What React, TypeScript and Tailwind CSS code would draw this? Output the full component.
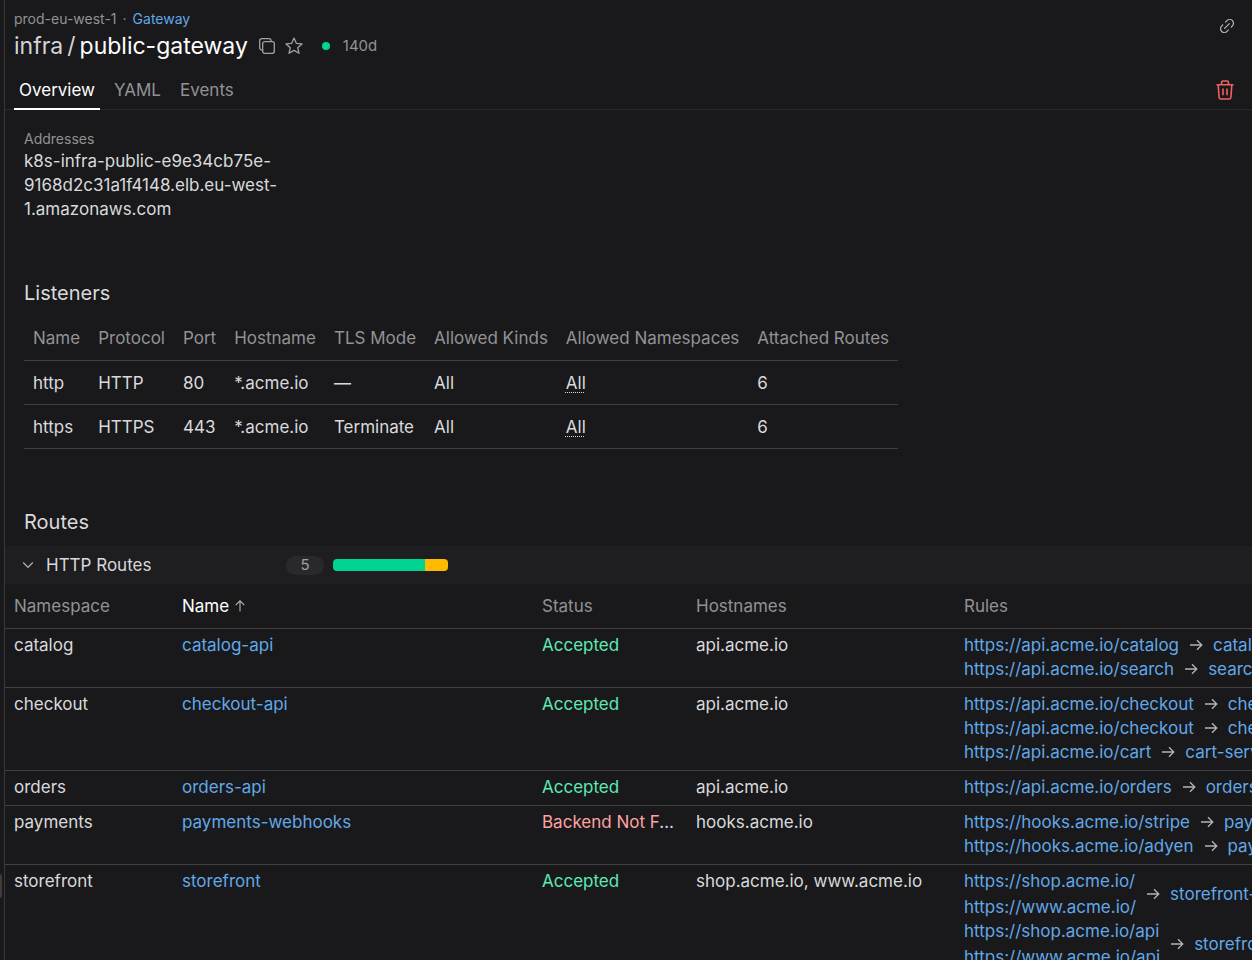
import type { ReactNode } from "react";

type Rule = { from: string[]; to: string };
type Route = { ns: string; name: string; status: string; ok: boolean; hosts: string; rules: Rule[] };

const listenerHeads = ["Name", "Protocol", "Port", "Hostname", "TLS Mode", "Allowed Kinds", "Allowed Namespaces", "Attached Routes"];
const listeners = [
  ["http", "HTTP", "80", "*.acme.io", "—", "All", "All", "6"],
  ["https", "HTTPS", "443", "*.acme.io", "Terminate", "All", "All", "6"],
];

const routes: Route[] = [
  {
    ns: "catalog", name: "catalog-api", status: "Accepted", ok: true, hosts: "api.acme.io",
    rules: [
      { from: ["https://api.acme.io/catalog"], to: "catalog-service" },
      { from: ["https://api.acme.io/search"], to: "search-service" },
    ],
  },
  {
    ns: "checkout", name: "checkout-api", status: "Accepted", ok: true, hosts: "api.acme.io",
    rules: [
      { from: ["https://api.acme.io/checkout"], to: "checkout-service" },
      { from: ["https://api.acme.io/checkout"], to: "checkout-service" },
      { from: ["https://api.acme.io/cart"], to: "cart-service" },
    ],
  },
  {
    ns: "orders", name: "orders-api", status: "Accepted", ok: true, hosts: "api.acme.io",
    rules: [{ from: ["https://api.acme.io/orders"], to: "orders-service" }],
  },
  {
    ns: "payments", name: "payments-webhooks", status: "Backend Not Found", ok: false, hosts: "hooks.acme.io",
    rules: [
      { from: ["https://hooks.acme.io/stripe"], to: "payments-service" },
      { from: ["https://hooks.acme.io/adyen"], to: "payments-service" },
    ],
  },
  {
    ns: "storefront", name: "storefront", status: "Accepted", ok: true, hosts: "shop.acme.io, www.acme.io",
    rules: [
      { from: ["https://shop.acme.io/", "https://www.acme.io/"], to: "storefront-web" },
      { from: ["https://shop.acme.io/api", "https://www.acme.io/api"], to: "storefront-api" },
    ],
  },
];

function Link({ children }: { children: ReactNode }) {
  return <a href="#" className="text-[#62a8e8]">{children}</a>;
}

function Arrow() {
  return (
    <svg viewBox="0 0 14 14" className="size-3.5 shrink-0 text-[#b4b4b8]" fill="none" stroke="currentColor" strokeWidth="1.3" aria-hidden="true">
      <path d="M1 7h11.6M8 2.2 12.8 7 8 11.8" />
    </svg>
  );
}

export default function App() {
  return (
    <div className="flex h-screen overflow-hidden bg-[#19191b] font-['Inter','Liberation_Sans',sans-serif] text-[17px] leading-6 text-[#d9d9dc]">
      <div className="flex w-1 shrink-0 flex-col justify-end pb-[62px]">
        <div className="h-6 w-0.5 rounded-r-full bg-[#3c3c3e]" />
      </div>
      <main className="min-w-0 flex-1 overflow-hidden border-l border-[#38383a]">
        <header className="flex items-start justify-between pt-[9px] pr-4 pl-[9px]">
          <div>
            <div className="flex gap-1.5 text-[14px] leading-5 text-[#929296]">
              <span>prod-eu-west-1</span>
              <span>·</span>
              <Link>Gateway</Link>
            </div>
            <div className="flex items-center pt-px">
              <h1 className="flex gap-1 text-[23px] leading-8 text-white">
                <span className="text-[#d4d4d8]">infra</span>
                <span className="text-[#d4d4d8]">/</span>
                <span>public-gateway</span>
              </h1>
              <button type="button" aria-label="Copy name" className="ml-[11px] text-[#a1a1a5]">
                <svg viewBox="0 0 16 16" className="size-4" fill="none" stroke="currentColor" strokeWidth="1.3" aria-hidden="true">
                  <rect x="3.7" y="3.7" width="11.6" height="11.6" rx="2" />
                  <path d="M3.4 12H2.7a2 2 0 0 1-2-2V2.700a2 2 0 0 1 2-2H10a2 2 0 0 1 2 2v.7" />
                </svg>
              </button>
              <button type="button" aria-label="Add to favourites" className="ml-2.5 text-[#a1a1a5]">
                <svg viewBox="0 0 18 18" className="size-[18px]" fill="none" stroke="currentColor" strokeWidth="1.3" strokeLinejoin="round" aria-hidden="true">
                  <path d="m9 1.1 2.3 5.2 5.7.6-4.3 3.8 1.3 5.6L9 13.4l-5 2.9 1.3-5.6L1 6.9l5.700-.6Z" />
                </svg>
              </button>
              <span className="ml-[19px] size-2 rounded-full bg-[#00d492]" />
              <span className="ml-[13px] text-[15px] text-[#929296]">140d</span>
            </div>
          </div>
          <button type="button" aria-label="Copy link" className="mt-2.5 mr-0.5 text-[#b4b4b8]">
            <svg viewBox="0 0 14 14" className="size-3.5" fill="none" stroke="currentColor" strokeWidth="1.2" strokeLinecap="round" aria-hidden="true">
              <path d="M4.600 9.400 9.400 4.600M5.600 3 7 1.600a3.700 3.700 0 0 1 5.400 5.200L11.200 8.200M2.800 5.900 1.600 7.200A3.700 3.700 0 0 0 7 12.400l1.400-1.500" />
            </svg>
          </button>
        </header>

        <div className="mt-2 flex items-center justify-between border-b border-[#29292b] pr-4 pl-[9px]">
          <nav className="-mb-px flex gap-[9px]">
            <a href="#" className="border-b-2 border-white px-[5px] pt-2 pb-1.5 text-white">Overview</a>
            <a href="#" className="border-b-2 border-transparent px-[5px] pt-2 pb-1.5 text-[#929296]">YAML</a>
            <a href="#" className="border-b-2 border-transparent px-[5px] pt-2 pb-1.5 text-[#929296]">Events</a>
          </nav>
          <button type="button" aria-label="Delete" className="mr-0.5 text-[#f2605f]">
            <svg viewBox="0 0 18 20" className="h-5 w-[18px]" fill="none" stroke="currentColor" strokeWidth="1.6" strokeLinejoin="round" aria-hidden="true">
              <path d="M.5 4.700h17M5.600 4.500V2.300A1.300 1.300 0 0 1 6.900 1h4.200a1.300 1.300 0 0 1 1.300 1.300v2.200M2.200 5l.9 12.500A1.700 1.700 0 0 0 4.800 19h8.400a1.700 1.700 0 0 0 1.700-1.500L15.800 5M7 8.400v6.800M11 8.400v6.800" />
            </svg>
          </button>
        </div>

        <section className="w-[290px] pt-[19px] pl-[19px]">
          <div className="text-[14px] leading-5 text-[#929296]">Addresses</div>
          <p>k8s-infra-public-e9e34cb75e-<wbr />9168d2c31a1f4148.elb.eu-west-1.amazonaws.com</p>
        </section>

        <section className="pt-[58px] pl-[19px]">
          <h2 className="text-[20px] leading-7">Listeners</h2>
          <table className="mt-[9px] text-left whitespace-nowrap">
            <thead>
              <tr className="border-b border-[#404042] text-[#929296]">
                {listenerHeads.map((h) => (
                  <th key={h} className="px-[9px] py-2.5 font-normal">{h}</th>
                ))}
              </tr>
            </thead>
            <tbody>
              {listeners.map((row) => (
                <tr key={row[0]} className="border-b border-[#404042]">
                  {row.map((cell, i) => (
                    <td key={i} className="px-[9px] pt-2.5 pb-[9px]">
                      {i === 6 ? <span className="underline decoration-dotted decoration-1 underline-offset-3">{cell}</span> : cell}
                    </td>
                  ))}
                </tr>
              ))}
            </tbody>
          </table>
        </section>

        <section className="pt-[59px]">
          <h2 className="pl-[19px] text-[20px] leading-7">Routes</h2>
          <button type="button" className="mt-2.5 flex h-[38px] w-full items-center bg-[#1e1e20] pl-[17px] text-left">
            <svg viewBox="0 0 12 12" className="size-3 text-[#b4b4b8]" fill="none" stroke="currentColor" strokeWidth="1.2" aria-hidden="true">
              <path d="m1.200 3.500 4.800 5 4.800-5" />
            </svg>
            <span className="ml-3 w-[240px]">HTTP Routes</span>
            <span className="flex h-[19px] w-[38px] items-center justify-center rounded-full bg-[#29292b] text-[15px] text-[#a1a1a5]">5</span>
            <span className="ml-[9px] flex h-3 w-[115px] overflow-hidden rounded-[4px]">
              <span className="w-4/5 bg-[#00d492]" />
              <span className="flex-1 bg-[#ffb900]" />
            </span>
          </button>
          <table className="w-[1500px] table-fixed text-left whitespace-nowrap">
            <colgroup>
              <col className="w-[168px]" />
              <col className="w-[360px]" />
              <col className="w-[154px]" />
              <col className="w-[268px]" />
              <col />
            </colgroup>
            <thead>
              <tr className="border-b border-[#404042] text-[#929296]">
                <th className="px-[9px] py-2.5 font-normal">Namespace</th>
                <th className="px-[9px] py-2.5 font-normal text-white" aria-sort="ascending">
                  <span className="flex items-center gap-1.5">
                    Name
                    <svg viewBox="0 0 10 12" className="h-3 w-2.5 text-[#b4b4b8]" fill="none" stroke="currentColor" strokeWidth="1.1" aria-hidden="true">
                      <path d="M5 11.500V1M.7 5.200 5 .9l4.300 4.300" />
                    </svg>
                  </span>
                </th>
                <th className="px-[9px] py-2.5 font-normal">Status</th>
                <th className="px-[9px] py-2.5 font-normal">Hostnames</th>
                <th className="px-[9px] py-2.5 font-normal">Rules</th>
              </tr>
            </thead>
            <tbody>
              {routes.map((r) => (
                <tr key={r.ns} className="border-b border-[#404042] align-top">
                  <td className="px-[9px] pt-1 pb-1.5">{r.ns}</td>
                  <td className="px-[9px] pt-1 pb-1.5"><Link>{r.name}</Link></td>
                  <td className="truncate px-[9px] pt-1 pb-1.5">
                    <span className={r.ok ? "text-[#5ee9b5]" : "text-[#ffa2a2]"}>{r.status}</span>
                  </td>
                  <td className="px-[9px] pt-1 pb-1.5">{r.hosts}</td>
                  <td className="px-[9px] pt-1 pb-1.5">
                    {r.rules.map((rule, i) => (
                      <div key={i} className="flex items-center gap-2.5">
                        <div className="flex flex-col gap-0.5">
                          {rule.from.map((u) => <Link key={u}>{u}</Link>)}
                        </div>
                        <Arrow />
                        <Link>{rule.to}</Link>
                      </div>
                    ))}
                  </td>
                </tr>
              ))}
            </tbody>
          </table>
        </section>
      </main>
    </div>
  );
}
